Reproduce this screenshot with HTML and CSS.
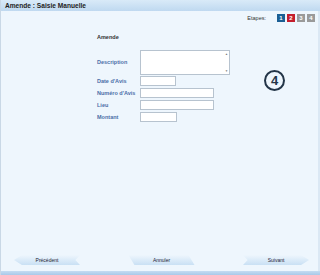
FILE: index.html
```html
<!DOCTYPE html>
<html>
<head>
<meta charset="utf-8">
<link rel="stylesheet" href="styles.css">
</head>
<body>
<div class="page">
  <div class="header">Amende : Saisie Manuelle</div>
  <div class="main">
    <div class="steps">
      <span class="steps-label">Etapes:</span>
      <span class="step step-blue">1</span>
      <span class="step step-red">2</span>
      <span class="step step-gray">3</span>
      <span class="step step-gray">4</span>
    </div>
    <div class="form">
      <div class="form-title">Amende</div>
      <div class="row row-desc">
        <label class="lbl">Description</label>
        <div class="textarea"><span class="sc-up">&#9650;</span><span class="sc-down">&#9660;</span></div>
      </div>
      <div class="row">
        <label class="lbl">Date d'Avis</label>
        <div class="input w-short"></div>
      </div>
      <div class="row">
        <label class="lbl">Numéro d'Avis</label>
        <div class="input w-long"></div>
      </div>
      <div class="row">
        <label class="lbl">Lieu</label>
        <div class="input w-long"></div>
      </div>
      <div class="row">
        <label class="lbl">Montant</label>
        <div class="input w-mid"></div>
      </div>
    </div>
    <div class="marker">4</div>
    <div class="footer">
      <div class="btn btn-prev">Précédent</div>
      <div class="btn btn-cancel">Annuler</div>
      <div class="btn btn-next">Suivant</div>
    </div>
  </div>
  <div class="bottom"></div>
</div>
</body>
</html>
```
FILE: styles.css
```css
html, body {
  margin: 0;
  padding: 0;
}
body {
  width: 320px;
  height: 275px;
  overflow: hidden;
  font-family: "Liberation Sans", Arial, sans-serif;
  background: #eef6fd;
}
.page {
  width: 320px;
  height: 275px;
  display: flex;
  flex-direction: column;
  border-left: 1px solid #c9d8e6;
  box-sizing: border-box;
}
.header {
  height: 11px;
  flex: none;
  background: linear-gradient(#d9eaf8, #bfd9f0);
  font-size: 6.6px;
  font-weight: bold;
  color: #222;
  line-height: 11px;
  padding-left: 4px;
}
.main {
  flex: 1;
  position: relative;
  background: #eef6fd;
  border-right: 2px solid #dbe8f4;
  display: flex;
  flex-direction: column;
}
.steps {
  display: flex;
  justify-content: flex-end;
  align-items: center;
  gap: 2px;
  padding: 2px 3px 0 0;
  height: 9px;
}
.steps-label {
  font-size: 5.5px;
  color: #333;
  margin-right: 9px;
}
.step {
  width: 8px;
  height: 8px;
  font-size: 6px;
  font-weight: bold;
  color: #fff;
  text-align: center;
  line-height: 8px;
}
.step-blue { background: #1b5f94; }
.step-red { background: #c41e2d; }
.step-gray { background: #9a9a9a; }
.form {
  margin-left: 96px;
  margin-top: 12px;
  display: flex;
  flex-direction: column;
}
.form-title {
  font-size: 5.5px;
  font-weight: bold;
  color: #333;
  margin-bottom: 10px;
}
.row {
  display: flex;
  align-items: center;
  height: 12px;
}
.row-desc {
  height: 25px;
}
.lbl {
  width: 43px;
  font-size: 5.5px;
  font-weight: bold;
  color: #4b6ea8;
  flex: none;
}
.row-desc .lbl {
  align-self: flex-start;
  padding-top: 9px;
}
.textarea {
  width: 88px;
  height: 23px;
  background: #fff;
  border: 1px solid #b7c3cf;
  position: relative;
}
.sc-up, .sc-down {
  position: absolute;
  right: 1px;
  font-size: 3px;
  color: #777;
}
.sc-up { top: 1px; }
.sc-down { bottom: 1px; }
.input {
  height: 10px;
  background: #fff;
  border: 1px solid #b7c3cf;
  box-sizing: border-box;
}
.w-short { width: 36px; }
.w-mid { width: 37px; }
.w-long { width: 74px; }
.marker {
  position: absolute;
  left: 263px;
  top: 59px;
  width: 17px;
  height: 17px;
  border: 2px solid #233548;
  border-radius: 50%;
  font-size: 13px;
  font-weight: bold;
  color: #233548;
  text-align: center;
  line-height: 17px;
}
.footer {
  margin-top: auto;
  display: flex;
  justify-content: space-between;
  align-items: center;
  padding: 0 9px 6px 13px;
}
.btn {
  width: 66px;
  height: 10px;
  font-size: 5px;
  color: #223;
  text-align: center;
  line-height: 10px;
  background: linear-gradient(#eef6fd, #c9e0f4);
}
.btn-prev {
  clip-path: polygon(0 50%, 12% 0, 100% 0, 93% 50%, 100% 100%, 12% 100%);
}
.btn-cancel {
  clip-path: polygon(0 0, 91% 0, 100% 100%, 9% 100%);
}
.btn-next {
  clip-path: polygon(0 0, 88% 0, 100% 50%, 88% 100%, 0 100%, 7% 50%);
}
.bottom {
  height: 4px;
  flex: none;
  background: linear-gradient(#c4dcf2, #a9c9e8);
}
```
